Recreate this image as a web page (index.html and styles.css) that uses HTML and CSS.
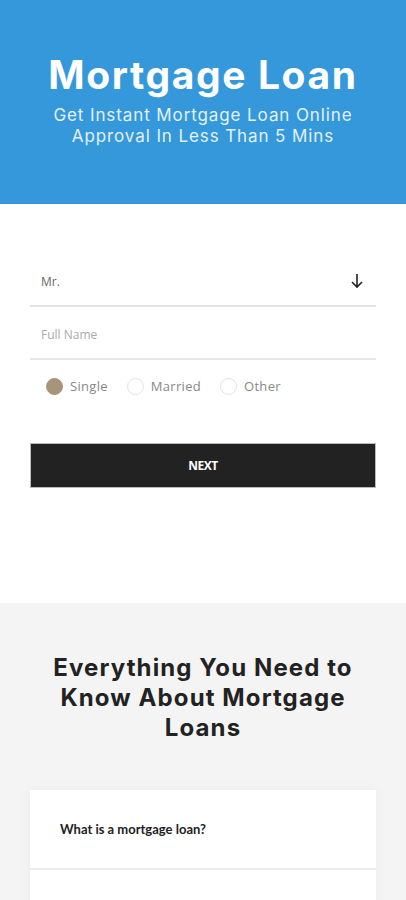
FILE: index.html
```html
<!DOCTYPE html>
<html lang="en">

<head>
    <meta charset="UTF-8">
    <meta name="viewport" content="width=device-width, initial-scale=1.0">
    <title>Mortgage Loan</title>
    <link rel="stylesheet" href="styles.css">
</head>

<body>
    <header class="hero">
        <h1 class="hero-title">Mortgage Loan</h1>
        <p class="hero-sub">Get Instant Mortgage Loan Online Approval In Less Than 5 Mins</p>
    </header>

    <section class="form-section">
        <form class="loan-form">
            <div class="field field-select">
                <span class="field-value">Mr.</span>
                <svg class="arrow" width="14" height="16" viewBox="0 0 14 16">
                    <path d="M7 1 V14 M2 9 L7 14 L12 9" fill="none" stroke="#222" stroke-width="1.6" />
                </svg>
            </div>
            <div class="field">
                <span class="field-placeholder">Full Name</span>
            </div>
            <div class="radios">
                <label class="radio"><span class="dot checked"></span>Single</label>
                <label class="radio"><span class="dot"></span>Married</label>
                <label class="radio"><span class="dot"></span>Other</label>
            </div>
            <button type="button" class="next-btn">NEXT</button>
        </form>
    </section>

    <section class="faq">
        <h2 class="faq-title">Everything You Need to Know About Mortgage Loans</h2>
        <div class="faq-card">
            <div class="faq-item">What is a mortgage loan?</div>
            <div class="faq-item"></div>
        </div>
    </section>
</body>

</html>
```

FILE: styles.css
```css
* {
    box-sizing: border-box;
}

body {
    margin: 0;
    font-family: "Open Sans", sans-serif;
    background: #fff;
}

.hero {
    background: #3498db;
    height: 204px;
    padding-top: 52px;
    text-align: center;
    color: #fff;
}

.hero-title {
    margin: 0;
    font-family: Inter, sans-serif;
    font-weight: 700;
    font-size: 39px;
    line-height: 46px;
    letter-spacing: 1.6px;
}

.hero-sub {
    margin: 7px auto 0;
    width: 360px;
    font-family: Inter, sans-serif;
    font-size: 17px;
    line-height: 21px;
    letter-spacing: 0.9px;
    color: #e3f1fb;
}

.form-section {
    height: 399px;
    padding: 50px 30px 0;
}

.loan-form {
    display: flex;
    flex-direction: column;
}

.field {
    height: 50px;
    display: flex;
    align-items: center;
    justify-content: space-between;
    border-bottom: 2px solid #e4e4e4;
    padding: 0 12px 0 11px;
    margin-top: 3px;
    font-size: 12px;
}

.field-value {
    color: #666;
}

.field-placeholder {
    color: #aaa;
}

.radios {
    display: flex;
    gap: 19px;
    padding: 16px 0 0 16px;
    height: 83px;
}

.radio {
    display: flex;
    align-items: center;
    gap: 7px;
    font-size: 13px;
    letter-spacing: 0.3px;
    color: #888;
    height: 20px;
}

.dot {
    width: 17px;
    height: 17px;
    border-radius: 50%;
    border: 1px solid #e2e2e2;
}

.dot.checked {
    background: #a89579;
    border-color: #a89579;
}

.next-btn {
    height: 45px;
    border: 1px solid #bbb;
    background: #222;
    color: #fff;
    font-family: "Open Sans", sans-serif;
    font-weight: 700;
    font-size: 12px;
    letter-spacing: -0.5px;
}

.faq {
    background: #f4f4f4;
    padding: 50px 20px 0;
    height: 297px;
    overflow: hidden;
}

.faq-title {
    margin: 0 0 47px;
    text-align: center;
    font-family: Inter, sans-serif;
    font-weight: 700;
    font-size: 24px;
    line-height: 30px;
    letter-spacing: 1.1px;
    color: #222;
}

.faq-card {
    margin: 0 10px;
    background: #fff;
    box-shadow: 0 0 12px rgba(0, 0, 0, 0.04);
}

.faq-item {
    height: 80px;
    padding: 31px 30px 0;
    font-family: Lato, sans-serif;
    font-weight: 700;
    font-size: 13px;
    color: #222;
    border-bottom: 2px solid #ececec;
}
```
